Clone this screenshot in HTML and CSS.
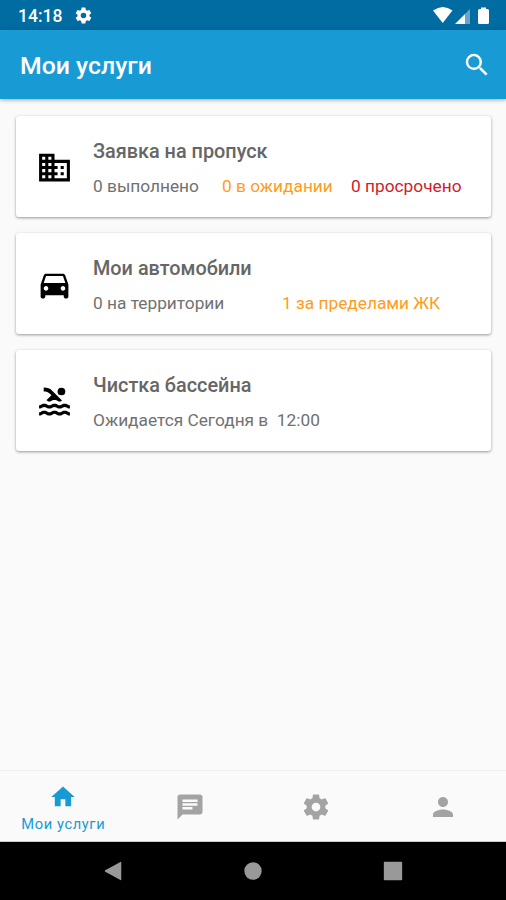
FILE: index.html
```html
<!DOCTYPE html>
<html lang="ru">
<head>
<meta charset="utf-8">
<title>Мои услуги</title>
<link rel="stylesheet" href="styles.css">
</head>
<body>
<div class="statusbar">
  <span class="time">14:18</span>
  <svg class="status-gear" viewBox="0 0 24 24"><path d="M19.43 12.98c.04-.32.07-.64.07-.98s-.03-.66-.07-.98l2.11-1.65c.19-.15.24-.42.12-.64l-2-3.46c-.12-.22-.39-.3-.61-.22l-2.49 1c-.52-.4-1.08-.73-1.69-.98l-.38-2.65A.49.49 0 0 0 14 2h-4c-.25 0-.46.18-.49.42l-.38 2.65c-.61.25-1.17.59-1.69.98l-2.49-1c-.23-.09-.49 0-.61.22l-2 3.46c-.13.22-.07.49.12.64l2.11 1.65c-.04.32-.07.65-.07.98s.03.66.07.98l-2.11 1.65c-.19.15-.24.42-.12.64l2 3.46c.12.22.39.3.61.22l2.49-1c.52.4 1.08.73 1.69.98l.38 2.65c.03.24.24.42.49.42h4c.25 0 .46-.18.49-.42l.38-2.65c.61-.25 1.17-.59 1.69-.98l2.49 1c.23.09.49 0 .61-.22l2-3.46c.12-.22.07-.49-.12-.64zM12 15.5A3.5 3.5 0 1 1 12 8.500a3.500 3.500 0 0 1 0 7z"/></svg>
  <svg class="signals" viewBox="0 0 60 20"><path d="M1 5.500Q11 -1.500 20.500 5.500L10.700 18z"/><path d="M23 19 33 9v10z"/><path opacity=".4" d="M33 9 38 4v15h-5z"/><path d="M46 5.500q0-1.500 1.500-1.500H49V2.500h5V4h1.500Q57 4 57 5.500v12q0 1.500-1.500 1.500h-8q-1.500 0-1.500-1.500z"/></svg>
</div>
<header class="appbar">
  <h1>Мои услуги</h1>
  <svg class="search" viewBox="0 0 24 24"><path d="M15.500 14h-.79l-.28-.27A6.471 6.471 0 0 0 16 9.500 6.500 6.500 0 1 0 9.500 16c1.610 0 3.090-.59 4.230-1.570l.27.28v.79l5 4.990L20.490 19zm-6 0C7.010 14 5 11.990 5 9.500S7.010 5 9.500 5 14 7.010 14 9.500 11.990 14 9.500 14z"/></svg>
</header>
<main class="services">
  <article class="card">
    <svg class="card-icon" viewBox="0 0 24 24"><path d="M12 7V3H2v18h20V7zM6 19H4v-2h2zm0-4H4v-2h2zm0-4H4V9h2zm0-4H4V5h2zm4 12H8v-2h2zm0-4H8v-2h2zm0-4H8V9h2zm0-4H8V5h2zm10 12h-8v-2h2v-2h-2v-2h2v-2h-2V9h8zm-2-8h-2v2h2zm0 4h-2v2h2z"/></svg>
    <div class="card-body">
      <h2>Заявка на пропуск</h2>
      <p class="stats"><span class="done">0 выполнено</span><span class="pending">0 в ожидании</span><span class="late">0 просрочено</span></p>
    </div>
  </article>
  <article class="card">
    <svg class="card-icon" viewBox="0 0 24 24"><path d="M18.920 6.010C18.720 5.420 18.160 5 17.500 5h-11c-.66 0-1.210.42-1.420 1.010L3 12v8c0 .55.45 1 1 1h1c.55 0 1-.45 1-1v-1h12v1c0 .55.45 1 1 1h1c.55 0 1-.45 1-1v-8zM6.500 16c-.83 0-1.500-.67-1.500-1.500S5.670 13 6.500 13s1.500.67 1.500 1.500S7.330 16 6.500 16zm11 0c-.83 0-1.500-.67-1.500-1.500s.67-1.500 1.500-1.500 1.500.67 1.500 1.500-.67 1.500-1.500 1.500zM5 11l1.500-4.500h11L19 11z"/></svg>
    <div class="card-body">
      <h2>Мои автомобили</h2>
      <p class="stats"><span class="inside">0 на территории</span><span class="outside">1 за пределами ЖК</span></p>
    </div>
  </article>
  <article class="card">
    <svg class="card-icon" viewBox="0 0 24 24"><path d="M22 21c-1.110 0-1.730-.37-2.180-.64-.37-.22-.6-.36-1.150-.36-.56 0-.78.13-1.150.36-.46.27-1.070.64-2.180.64s-1.730-.37-2.180-.64c-.37-.22-.6-.36-1.150-.36-.56 0-.78.13-1.150.36-.46.27-1.080.64-2.190.64-1.110 0-1.730-.37-2.180-.64-.37-.23-.6-.36-1.150-.36s-.78.13-1.150.36c-.46.27-1.080.64-2.190.64v-2c.56 0 .78-.13 1.150-.36.46-.27 1.080-.64 2.190-.64s1.730.37 2.180.64c.37.23.59.36 1.150.36.56 0 .78-.13 1.150-.36.46-.27 1.080-.64 2.190-.64 1.110 0 1.730.37 2.180.64.37.22.6.36 1.150.36s.78-.13 1.150-.36c.45-.27 1.070-.64 2.180-.64s1.730.37 2.180.64c.37.23.59.36 1.150.36zM22 16.500c-1.110 0-1.730-.37-2.180-.64-.37-.22-.6-.36-1.150-.36-.56 0-.78.13-1.150.36-.45.27-1.070.64-2.180.64s-1.730-.37-2.180-.64c-.37-.22-.6-.36-1.150-.36-.56 0-.78.13-1.150.36-.45.27-1.070.64-2.180.64s-1.730-.37-2.180-.64c-.37-.22-.6-.36-1.150-.36-.56 0-.78.13-1.150.36-.47.27-1.090.64-2.200.64v-2c.56 0 .78-.13 1.150-.36.45-.27 1.070-.64 2.180-.64s1.730.37 2.180.64c.37.22.6.36 1.150.36.56 0 .78-.13 1.150-.36.45-.27 1.070-.64 2.180-.64s1.730.37 2.180.64c.37.22.6.36 1.150.36s.78-.13 1.150-.36c.45-.27 1.070-.64 2.180-.64s1.730.37 2.180.64c.37.22.6.36 1.150.36zM8.670 12c.56 0 .78-.13 1.150-.36.46-.27 1.080-.64 2.190-.64 1.110 0 1.730.37 2.180.64.37.22.6.36 1.150.36s.78-.13 1.150-.36c.12-.07.26-.15.41-.23L10.480 5C8.930 3.450 7.500 2.990 5 3v2.500c1.820-.01 2.890.39 4 1.500l1 1-3.250 3.250c.31.12.56.27.77.39.37.23.59.36 1.150.36z"/><circle cx="16.500" cy="5.500" r="2.500"/></svg>
    <div class="card-body">
      <h2>Чистка бассейна</h2>
      <p class="stats"><span>Ожидается Сегодня в&nbsp; 12:00</span></p>
    </div>
  </article>
</main>
<nav class="tabs">
  <a class="tab active"><svg viewBox="0 0 24 24"><path d="M10 20v-6h4v6h5v-8h3L12 3 2 12h3v8z"/></svg><span>Мои услуги</span></a>
  <a class="tab"><svg viewBox="0 0 24 24"><path d="M20 2H4c-1.100 0-1.990.9-1.990 2L2 22l4-4h14c1.100 0 2-.9 2-2V4c0-1.100-.9-2-2-2zM6 9h12v2H6zm8 5H6v-2h8zm4-6H6V6h12z"/></svg></a>
  <a class="tab"><svg viewBox="0 0 24 24"><path d="M19.430 12.980c.04-.32.07-.64.07-.98s-.03-.66-.07-.98l2.110-1.650c.19-.15.24-.42.12-.64l-2-3.460c-.12-.22-.39-.3-.61-.22l-2.490 1c-.52-.4-1.080-.73-1.690-.98l-.38-2.650A.49.49 0 0 0 14 2h-4c-.25 0-.46.18-.49.42l-.38 2.650c-.61.25-1.170.59-1.690.98l-2.490-1c-.23-.09-.49 0-.61.22l-2 3.460c-.13.22-.07.49.12.64l2.110 1.650c-.04.32-.07.65-.07.98s.03.66.07.98l-2.110 1.650c-.19.15-.24.42-.12.64l2 3.460c.12.22.39.3.61.22l2.490-1c.52.4 1.080.73 1.690.98l.38 2.650c.03.24.24.42.49.42h4c.25 0 .46-.18.49-.42l.38-2.650c.61-.25 1.170-.59 1.690-.98l2.490 1c.23.09.49 0 .61-.22l2-3.460c.12-.22.07-.49-.12-.64zM12 15.500A3.500 3.500 0 1 1 12 8.500a3.500 3.500 0 0 1 0 7z"/></svg></a>
  <a class="tab"><svg viewBox="0 0 24 24"><path d="M12 12c2.210 0 4-1.790 4-4s-1.790-4-4-4-4 1.790-4 4 1.790 4 4 4zm0 2c-2.670 0-8 1.340-8 4v2h16v-2c0-2.660-5.330-4-8-4z"/></svg></a>
</nav>
<div class="sysnav">
  <svg viewBox="0 0 24 24"><path d="M21 2.600v18.800q0 1-.9.500L3.500 12.700q-1.100-.7 0-1.400L20.100 2.100q.9-.5.9.5z"/></svg>
  <svg viewBox="0 0 24 24"><circle cx="12" cy="12" r="9.500"/></svg>
  <svg viewBox="0 0 24 24"><rect x="2" y="2" width="20" height="20" rx="1"/></svg>
</div>
</body>
</html>
```

FILE: styles.css
```css
* { box-sizing: border-box; }
body {
  margin: 0;
  width: 506px;
  height: 900px;
  overflow: hidden;
  display: flex;
  flex-direction: column;
  background: #fafafa;
  font-family: Roboto, "Liberation Sans", sans-serif;
}
svg { display: block; fill: currentColor; flex: none; }
h1, h2, p { margin: 0; }

.statusbar {
  flex: none;
  height: 30px;
  padding: 0 14px 0 18px;
  display: flex;
  align-items: center;
  background: #006ca2;
  color: #fff;
}
.time { width: 45px; padding-top: 2px; font-size: 17.500px; font-weight: 500; }
.status-gear { width: 19px; height: 19px; margin-left: 11px; }
.signals { width: 60px; height: 20px; margin: 0 0 1px auto; }

.appbar {
  flex: none;
  height: 69px;
  padding: 0 14px 0 20px;
  display: flex;
  align-items: center;
  justify-content: space-between;
  background: #189bd5;
  color: #fff;
  box-shadow: 0 1px 4px rgba(0, 0, 0, .35);
}
.appbar h1 { font-size: 24.800px; font-weight: 500; line-height: 30px; padding-top: 3px; }
.search { width: 30px; height: 30px; }

.services {
  flex: 1;
  padding: 17px 15px 0 16px;
  display: flex;
  flex-direction: column;
  gap: 16px;
}
.card {
  height: 101px;
  padding-left: 20px;
  display: flex;
  align-items: center;
  background: #fff;
  border-radius: 3px;
  color: #666;
  box-shadow: 0 1px 3px rgba(0, 0, 0, .4);
}
.card-icon { width: 37px; height: 37px; margin-top: 1px; color: #000; }
.card-body { margin-left: 20px; padding-top: 3px; flex: 1; }
.card h2 { font-size: 19.850px; font-weight: 500; line-height: 26px; }
.stats { display: flex; margin-top: 9px; font-size: 17.300px; line-height: 24px; white-space: pre; color: #717171; }
.done { width: 129px; }
.pending { width: 129px; color: #ff9c1c; }
.late { color: #d0202c; }
.inside { width: 189px; }
.outside { color: #ff9c1c; }

.tabs {
  flex: none;
  height: 72px;
  display: grid;
  grid-template-columns: repeat(4, 1fr);
  border-top: 1px solid #eee;
  border-bottom: 1px solid #ccc;
}
.tab {
  display: flex;
  flex-direction: column;
  align-items: center;
  justify-content: center;
  padding-top: 1px;
  color: #a3a3a3;
}
.tab svg { width: 30px; height: 30px; }
.tab.active { padding-top: 4px; color: #189bd5; }
.tab.active svg { width: 28px; height: 28px; }
.tab span { margin-top: 3px; font-size: 14.700px; line-height: 20px; letter-spacing: .6px; }

.sysnav {
  flex: none;
  height: 58px;
  padding: 0 102px;
  display: flex;
  align-items: center;
  justify-content: space-between;
  background: #000;
  color: #999;
}
.sysnav svg { width: 22px; height: 22px; }
```
